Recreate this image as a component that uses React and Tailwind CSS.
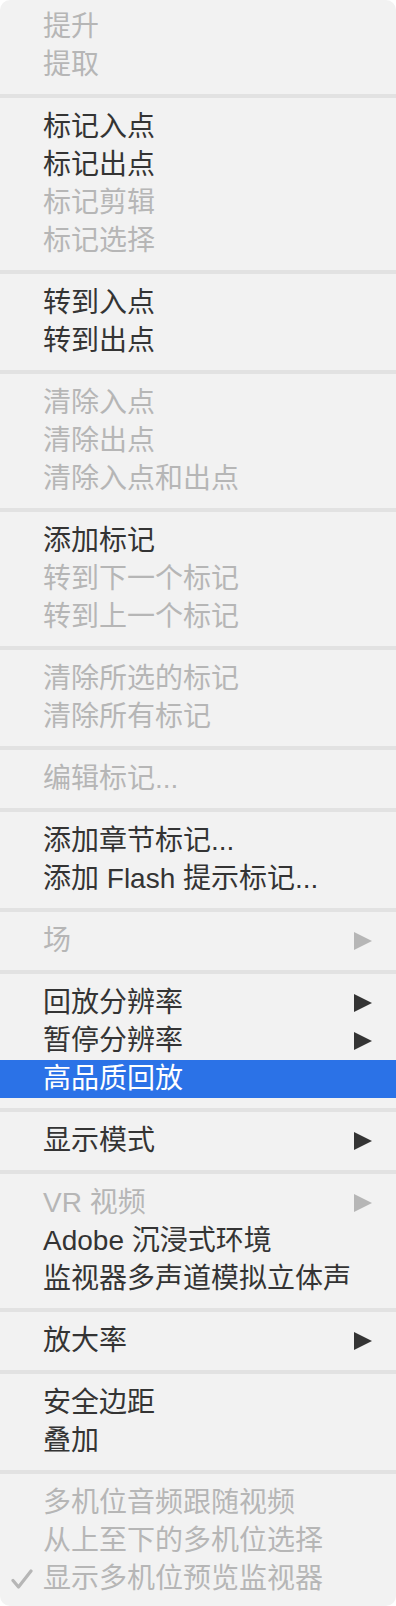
import React from "react";

const sections = [
  [
    { t: "提升", d: true },
    { t: "提取", d: true },
  ],
  [
    { t: "标记入点" },
    { t: "标记出点" },
    { t: "标记剪辑", d: true },
    { t: "标记选择", d: true },
  ],
  [{ t: "转到入点" }, { t: "转到出点" }],
  [
    { t: "清除入点", d: true },
    { t: "清除出点", d: true },
    { t: "清除入点和出点", d: true },
  ],
  [
    { t: "添加标记" },
    { t: "转到下一个标记", d: true },
    { t: "转到上一个标记", d: true },
  ],
  [
    { t: "清除所选的标记", d: true },
    { t: "清除所有标记", d: true },
  ],
  [{ t: "编辑标记...", d: true }],
  [{ t: "添加章节标记..." }, { t: "添加 Flash 提示标记..." }],
  [{ t: "场", d: true, a: true }],
  [
    { t: "回放分辨率", a: true },
    { t: "暂停分辨率", a: true },
    { t: "高品质回放", h: true },
  ],
  [{ t: "显示模式", a: true }],
  [
    { t: "VR 视频", d: true, a: true },
    { t: "Adobe 沉浸式环境" },
    { t: "监视器多声道模拟立体声" },
  ],
  [{ t: "放大率", a: true }],
  [{ t: "安全边距" }, { t: "叠加" }],
  [
    { t: "多机位音频跟随视频", d: true },
    { t: "从上至下的多机位选择", d: true },
    { t: "显示多机位预览监视器", d: true, c: true },
  ],
];

function Arrow({ color }) {
  return (
    <svg width="18" height="18" viewBox="0 0 18 18" className="block">
      <polygon points="0,0 18,9 0,18" fill={color} />
    </svg>
  );
}

function Check({ color }) {
  return (
    <svg width="22" height="22" viewBox="0 0 22 22" className="block">
      <path
        d="M2 12.5 L7.5 19 L20 3"
        fill="none"
        stroke={color}
        strokeWidth="3.2"
        strokeLinecap="round"
        strokeLinejoin="round"
      />
    </svg>
  );
}

function Item({ it }) {
  const color = it.h ? "#ffffff" : it.d ? "#b6b6b6" : "#343434";
  const textCls = it.h
    ? "text-white"
    : it.d
    ? "text-[#b6b6b6]"
    : "text-[#343434]";
  return (
    <div
      className={
        "relative flex h-[38px] items-center pl-[43px] pr-[24px] " +
        (it.h ? "bg-[#2b72e7]" : "")
      }
    >
      {it.c && (
        <div className="absolute left-[11px] top-[8px]">
          <Check color={color} />
        </div>
      )}
      <span
        className={
          "flex-1 whitespace-nowrap text-[28px] leading-[38px] " + textCls
        }
      >
        {it.t}
      </span>
      {it.a && <Arrow color={color} />}
    </div>
  );
}

export default function App() {
  return (
    <div className="w-[396px] bg-white font-['Liberation_Sans','Noto_Sans_CJK_SC',sans-serif]">
      <div className="rounded-[10px] bg-[#f2f2f2] py-[8px]">
        {sections.map((sec, i) => (
          <React.Fragment key={i}>
            {i > 0 && (
              <div className="flex h-[24px] items-center">
                <div className="h-[4px] w-full bg-[#e2e2e2]" />
              </div>
            )}
            {sec.map((it, j) => (
              <Item key={j} it={it} />
            ))}
          </React.Fragment>
        ))}
      </div>
    </div>
  );
}
